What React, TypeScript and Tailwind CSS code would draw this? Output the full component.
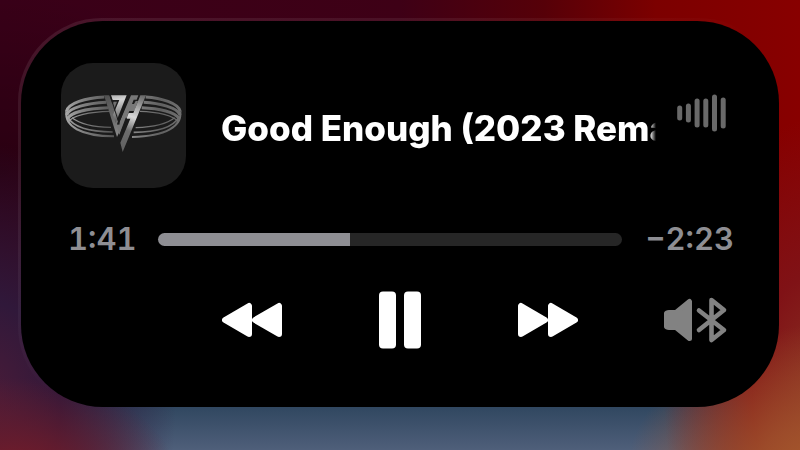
import { useState } from "react";
import type { CSSProperties } from "react";

const DURATION = 244;

const LEVELS = [15, 19, 29, 29, 37, 31];

function clock(seconds: number) {
  return `${Math.floor(seconds / 60)}:${String(seconds % 60).padStart(2, "0")}`;
}

function AlbumArt() {
  return (
    <svg
      viewBox="33 24 375 375"
      role="img"
      aria-label="Album cover"
      className="size-[125px] shrink-0 rounded-[32px] bg-[#1b1b1b]"
    >
      <defs>
        <linearGradient id="ringLeft" x1="47" y1="0" x2="200" y2="0" gradientUnits="userSpaceOnUse">
          <stop offset="0" stopColor="#a8a8a8" />
          <stop offset="0.35" stopColor="#808080" />
          <stop offset="1" stopColor="#505050" />
        </linearGradient>
        <linearGradient id="ringRight" x1="240" y1="0" x2="394" y2="0" gradientUnits="userSpaceOnUse">
          <stop offset="0" stopColor="#8c8c8c" />
          <stop offset="0.6" stopColor="#606060" />
          <stop offset="1" stopColor="#707070" />
        </linearGradient>
        <linearGradient id="steel" x1="165" y1="120" x2="204" y2="245" gradientUnits="userSpaceOnUse">
          <stop offset="0" stopColor="#505050" />
          <stop offset="0.5" stopColor="#686868" />
          <stop offset="1" stopColor="#8a8a8a" />
        </linearGradient>
        <linearGradient id="shine" x1="270" y1="120" x2="215" y2="285" gradientUnits="userSpaceOnUse">
          <stop offset="0" stopColor="#6a6a6a" />
          <stop offset="0.4" stopColor="#d8d8d8" />
          <stop offset="0.65" stopColor="#6c6c6c" />
          <stop offset="1" stopColor="#606060" />
        </linearGradient>
        <linearGradient id="bright" x1="190" y1="120" x2="205" y2="205" gradientUnits="userSpaceOnUse">
          <stop offset="0" stopColor="#b0b0b0" />
          <stop offset="0.2" stopColor="#d4d4d4" />
          <stop offset="1" stopColor="#505050" />
        </linearGradient>
      </defs>
      <g fill="none" stroke="url(#ringLeft)">
        <path d="M49 170C54 144 108 129 163 126" strokeWidth="9" />
        <path d="M50 180C58 157 112 145 169 142" strokeWidth="9" />
        <path d="M52 192C62 171 114 160 175 158" strokeWidth="9" />
        <path d="M54 202C66 181 120 170 180 169" strokeWidth="4" />
        <path d="M49 170C44 213 90 243 192 244" strokeWidth="6" />
        <path d="M54 188C70 216 115 230 188 231" strokeWidth="5" />
        <path d="M66 188C90 207 130 216 183 217" strokeWidth="4" />
      </g>
      <g fill="none" stroke="url(#ringRight)">
        <path d="M391 170C386 144 332 129 287 126" strokeWidth="9" />
        <path d="M390 180C382 157 328 145 281 142" strokeWidth="9" />
        <path d="M388 192C378 171 326 160 275 158" strokeWidth="9" />
        <path d="M386 202C374 181 320 170 270 169" strokeWidth="4" />
        <path d="M391 170C396 213 350 244 246 246" strokeWidth="6" />
        <path d="M386 188C370 216 325 231 251 232" strokeWidth="5" />
        <path d="M374 188C350 207 310 216 257 218" strokeWidth="4" />
      </g>
      <path d="M162 121H178L212 222L201 246Z" fill="url(#steel)" />
      <path d="M183 121H230L197 204L189 180L208 135H188Z" fill="url(#bright)" />
      <path d="M191 140H201L192 163L187 149Z" fill="#707070" />
      <path d="M243 121H265L260 134H251L246 147H252L257 138H264L253 168H238L208 241L202 217Z" fill="#787878" />
      <path d="M271 121H288L218 291L211 263L241 191H229L236 174H250Z" fill="url(#shine)" />
      <g fill="none" stroke="#1b1b1b">
        <path d="M180 119L208 208" strokeWidth="3" />
        <path d="M237 119L203 209" strokeWidth="5" />
        <path d="M229 189L207 248" strokeWidth="4" />
      </g>
    </svg>
  );
}

function Waveform() {
  return (
    <svg
      viewBox="0 0 49 38"
      aria-hidden="true"
      className="mt-[31px] h-[38px] w-[49px] shrink-0 self-start fill-[#696969]"
    >
      {LEVELS.map((level, i) => (
        <rect key={i} x={0.2 + i * 8.7} y={19 - level / 2} width="5" height={level} rx="2.5" />
      ))}
    </svg>
  );
}

function SkipIcon({ flipped = false }: { flipped?: boolean }) {
  return (
    <svg
      viewBox="0 0 60 36"
      aria-hidden="true"
      className={`h-9 w-[60px] fill-white stroke-white ${flipped ? "-scale-x-100" : ""}`}
      strokeWidth="6"
      strokeLinejoin="round"
    >
      <path d="M3 18L27 4V32Z" />
      <path d="M33 18L57 4V32Z" />
    </svg>
  );
}

function PauseIcon() {
  return (
    <svg viewBox="0 0 42 58" aria-hidden="true" className="h-[58px] w-[42px] fill-white">
      <rect x="0" y="0.5" width="17" height="57" rx="4" />
      <rect x="25" y="0.5" width="17" height="57" rx="4" />
    </svg>
  );
}

function OutputIcon() {
  return (
    <svg viewBox="0 0 64 48" aria-hidden="true" className="h-12 w-16" strokeLinejoin="round" strokeLinecap="round">
      <path
        d="M5 16.500H12L25.500 5.500V42.500L12 31.500H5Q2 31.500 2 28.500V19.500Q2 16.500 5 16.500Z"
        fill="#828282"
        stroke="#828282"
        strokeWidth="5"
      />
      <path d="M35 14.500L60 34L47.500 44V4L60 14L35 34" fill="none" stroke="#828282" strokeWidth="4.600" />
    </svg>
  );
}

export default function App() {
  const [elapsed, setElapsed] = useState(101);
  const [playing, setPlaying] = useState(true);
  const played = { "--played": `${(elapsed / DURATION) * 100}%` } as CSSProperties;

  return (
    <main className="min-h-screen bg-[#30001a] bg-[radial-gradient(ellipse_20%_22%_at_2%_106%,#7a1c28_0%,#6a1c2cd0_40%,transparent_100%),radial-gradient(ellipse_26%_36%_at_104%_108%,#ac622e_0%,#a0522ce0_40%,transparent_100%),radial-gradient(ellipse_24%_58%_at_-2%_90%,#4c1c38_0%,#30183a_40%,transparent_100%),radial-gradient(ellipse_20%_62%_at_103%_88%,#8a3424_0%,#801216_45%,transparent_100%),linear-gradient(to_bottom,transparent_76%,#2f465f_90%,#4f5f7a_100%),radial-gradient(ellipse_30%_40%_at_0%_38%,#00000048_0%,transparent_100%),linear-gradient(to_right,#390018_0%,#3e0016_50%,#560008_68%,#7c0000_82%,#880000_100%)] bg-no-repeat p-[18px] pb-10 font-['Inter','Liberation_Sans',sans-serif]">
      <div className="rounded-[84px] bg-[linear-gradient(to_bottom_right,#ffffff16_0%,#ffffff10_30%,transparent_50%)] p-[3px]">
        <section aria-label="Now playing" className="rounded-[82px] bg-black pt-[42px] pb-[58px]">
          <div className="flex items-center pr-[53px] pl-10">
            <AlbumArt />
            <h1 className="mt-1 ml-[35px] min-w-0 flex-1 overflow-hidden [mask-image:linear-gradient(to_right,black_calc(100%-6px),transparent)] text-[35px] leading-[48px] font-extrabold whitespace-nowrap text-white">
              Good Enough (2023 Rema
            </h1>
            <div className="ml-[21px] flex self-stretch">
              <Waveform />
            </div>
          </div>

          <div className="mt-[33px] flex h-9 items-center pr-[45px] pl-[47px] text-[31px] leading-9 font-semibold text-[#8e8e93] tabular-nums">
            <span className="w-[90px] shrink-0">{clock(elapsed)}</span>
            <input
              type="range"
              aria-label="Playback position"
              min={0}
              max={DURATION}
              value={elapsed}
              onChange={(e) => setElapsed(Number(e.target.value))}
              style={played}
              className="h-[13px] min-w-0 flex-1 cursor-pointer appearance-none rounded-full bg-[linear-gradient(to_right,#8e8e93_var(--played),#262626_var(--played))] [&::-webkit-slider-thumb]:size-0 [&::-webkit-slider-thumb]:appearance-none"
            />
            <span className="w-28 shrink-0 text-right">−{clock(DURATION - elapsed)}</span>
          </div>

          <div className="mt-[34px] grid h-[58px] grid-cols-5 place-items-center px-[9px]">
            <button type="button" aria-label="Rewind" className="col-start-2">
              <SkipIcon />
            </button>
            <button type="button" aria-label="Pause" aria-pressed={!playing} onClick={() => setPlaying(!playing)}>
              <PauseIcon />
            </button>
            <button type="button" aria-label="Fast forward">
              <SkipIcon flipped />
            </button>
            <button type="button" aria-label="Audio output">
              <OutputIcon />
            </button>
          </div>
        </section>
      </div>
    </main>
  );
}
